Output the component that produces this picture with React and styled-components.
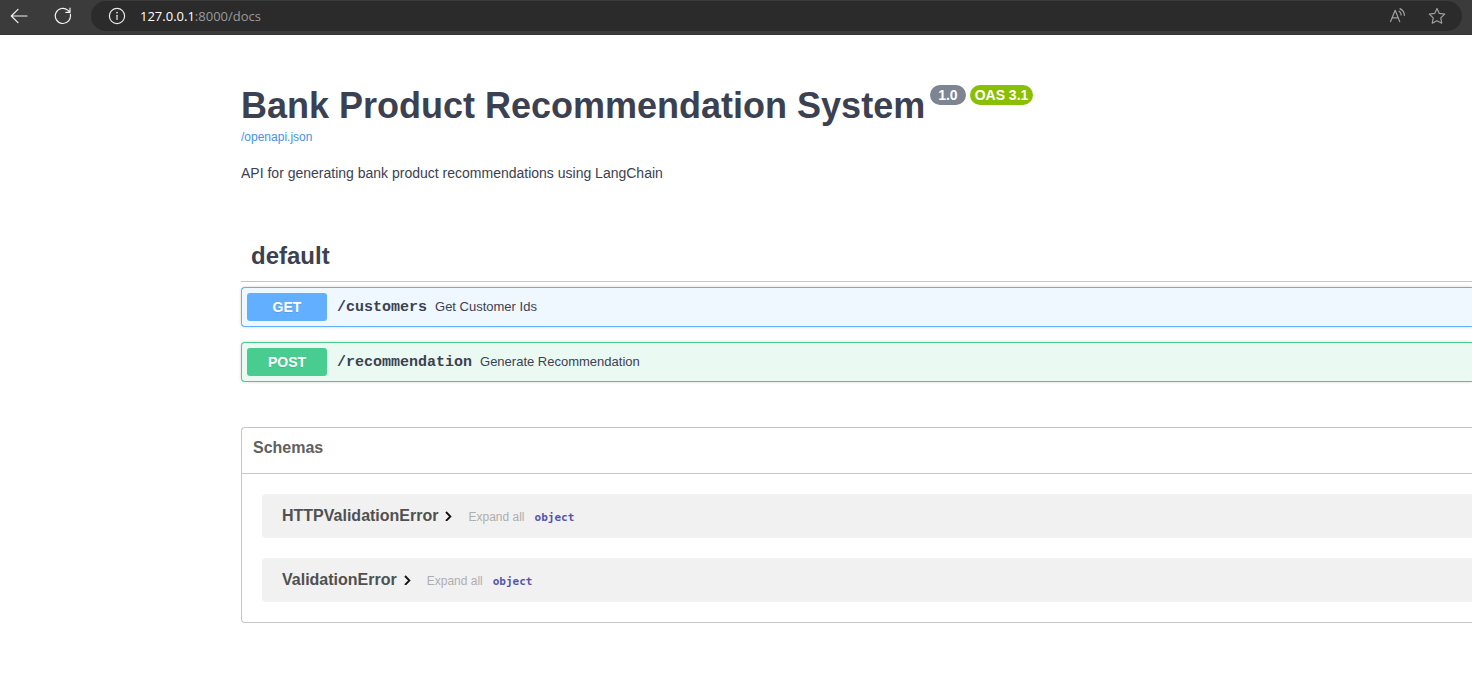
import React from "react";
import styled, { createGlobalStyle } from "styled-components";

const GlobalStyle = createGlobalStyle`
  * { box-sizing: border-box; }
  body {
    margin: 0;
    background: #fff;
    color: #3b4151;
    font-family: "Liberation Sans", Arial, sans-serif;
  }
  button { font-family: inherit; border: 0; padding: 0; background: none; cursor: pointer; }
`;

const BrowserBar = styled.header`
  display: flex;
  align-items: flex-start;
  height: 35px;
  padding: 1px 10px 0 7px;
  background: #3b3b3b;
  border-bottom: 1px solid #343434;
`;

const NavButton = styled.button`
  display: flex;
  align-items: center;
  justify-content: center;
  width: 24px;
  height: 30px;
  margin-right: 20px;
  color: #f2f2f2;
`;

const AddressBar = styled.div`
  flex: 1;
  display: flex;
  align-items: center;
  height: 30px;
  margin-left: -4px;
  padding: 0 13px 0 14px;
  border-radius: 15px;
  background: #2b2b2b;
`;

const AddressButton = styled.button`
  display: flex;
  align-items: center;
  justify-content: center;
  width: 24px;
  height: 24px;
  color: ${(p) => p.$color};
`;

const Url = styled.div`
  flex: 1;
  margin-left: 11px;
  font: 13px/18px "Open Sans", "Noto Sans", sans-serif;
  color: #9a9a9a;
`;

const UrlHost = styled.span`
  color: #fff;
`;

const AddressActions = styled.div`
  display: flex;
  gap: 16px;
`;

const Main = styled.main`
  padding: 50px 0 50px 241px;
`;

const TitleRow = styled.div`
  display: flex;
  align-items: flex-start;
`;

const Title = styled.h1`
  margin: 0 5px 0 0;
  font-size: 36px;
  line-height: 41px;
  white-space: nowrap;
`;

const Badge = styled.span`
  margin-right: 4px;
  padding: 0 ${(p) => p.$pad}px;
  border-radius: 10px;
  background: ${(p) => p.$color};
  color: #fff;
  font-size: 14px;
  font-weight: 700;
  line-height: 20px;
  white-space: nowrap;
`;

const SpecLink = styled.a`
  display: block;
  width: fit-content;
  margin-top: 4px;
  color: #4990e2;
  font-size: 12px;
  line-height: 14px;
  text-decoration: none;
`;

const Description = styled.p`
  margin: 21px 0 61px;
  font-size: 14px;
  line-height: 16px;
`;

const TagHeading = styled.h2`
  margin: 0 0 5px;
  padding: 0 10px 11px;
  border-bottom: 1px solid #c4c6ca;
  font-size: 24px;
  line-height: 28px;
`;

const Operations = styled.div`
  display: flex;
  flex-direction: column;
  gap: 15px;
`;

const Operation = styled.button`
  display: flex;
  align-items: center;
  width: 100%;
  padding: 5px;
  border: 1px solid ${(p) => p.$color};
  border-right: 0;
  border-radius: 4px 0 0 4px;
  background: ${(p) => p.$tint};
  box-shadow: 0 0 3px rgba(0, 0, 0, 0.19);
  color: #3b4151;
  text-align: left;
`;

const Method = styled.span`
  width: 80px;
  border-radius: 3px;
  background: ${(p) => p.$color};
  color: #fff;
  font-size: 14px;
  font-weight: 700;
  line-height: 28px;
  text-align: center;
  text-shadow: 0 1px 0 rgba(0, 0, 0, 0.1);
`;

const Path = styled.span`
  padding: 2px 8px 0 10px;
  font: 700 15px/18px "Liberation Mono", monospace;
`;

const Summary = styled.span`
  font-size: 13px;
  line-height: 16px;
`;

const Schemas = styled.section`
  margin-top: 45px;
  border: 1px solid #c4c6ca;
  border-right: 0;
  border-radius: 4px 0 0 4px;
`;

const SchemasHeading = styled.h3`
  margin: 0;
  padding: 11px 11px 16px;
  border-bottom: 1px solid #c4c6ca;
  color: #606060;
  font-size: 16px;
  line-height: 18px;
`;

const SchemaList = styled.div`
  display: flex;
  flex-direction: column;
  gap: 20px;
  padding: 20px 0 20px 20px;
`;

const Schema = styled.div`
  display: flex;
  align-items: baseline;
  padding: 13px 20px;
  border-radius: 4px 0 0 4px;
  background: #f1f1f1;
`;

const SchemaToggle = styled.button`
  display: flex;
  align-items: center;
  gap: 7px;
  color: #505050;
  font-size: 16px;
  font-weight: 700;
  line-height: 18px;
`;

const ExpandAll = styled.button`
  margin: 0 10px 0 16px;
  color: #afaeae;
  font-size: 12px;
  line-height: 14px;
`;

const SchemaType = styled.span`
  color: #5555aa;
  font: 700 11px/14px "DejaVu Sans Mono", monospace;
`;

const Icon = ({ size = 18, children }) => (
  <svg width={size} height={size} viewBox={`0 0 ${size} ${size}`} fill="none" stroke="currentColor" strokeWidth="1.2" strokeLinecap="round" strokeLinejoin="round" aria-hidden="true">
    {children}
  </svg>
);

const operations = [
  { method: "GET", path: "/customers", summary: "Get Customer Ids", color: "#61affe", tint: "#eff7ff" },
  { method: "POST", path: "/recommendation", summary: "Generate Recommendation", color: "#49cc90", tint: "#ebf9f3" },
];

const schemas = ["HTTPValidationError", "ValidationError"];

export default function App() {
  return (
    <>
      <GlobalStyle />
      <BrowserBar>
        <NavButton aria-label="Back">
          <Icon><path d="M17 9H1.5M8 2.3 1.3 9 8 15.7" /></Icon>
        </NavButton>
        <NavButton aria-label="Reload">
          <Icon><path d="M16.3 7.2A7.6 7.6 0 1 1 13.8 3.1L16 5.2M16 1.2V5.3H11.8" /></Icon>
        </NavButton>
        <AddressBar>
          <AddressButton aria-label="View site information" $color="#e8e8e8">
            <Icon>
              <circle cx="9" cy="9" r="7.6" />
              <path d="M9 8.3V12.4" />
              <path d="M9 5.6V5.8" strokeWidth="1.6" />
            </Icon>
          </AddressButton>
          <Url><UrlHost>127.0.0.1</UrlHost>:8000/docs</Url>
          <AddressActions>
            <AddressButton aria-label="Read aloud" $color="#a0a0a0">
              <Icon>
                <path d="M2.6 14.6 7.2 3.3 11.7 14.6M4.1 10.8H10.2M11.2 4.2Q13 5.4 13.1 8M12 1.6Q16.2 3.8 16.4 8.4" />
              </Icon>
            </AddressButton>
            <AddressButton aria-label="Add to favorites" $color="#a0a0a0">
              <Icon>
                <path d="M9 1.5 11.3 6.4 16.7 7.1 12.8 10.9 13.7 16.2 9 13.7 4.3 16.2 5.2 10.9 1.3 7.1 6.7 6.4Z" />
              </Icon>
            </AddressButton>
          </AddressActions>
        </AddressBar>
      </BrowserBar>
      <Main>
        <TitleRow>
          <Title>Bank Product Recommendation System</Title>
          <Badge $color="#7d8492" $pad={8}>1.0</Badge>
          <Badge $color="#89bf04" $pad={5}>OAS 3.1</Badge>
        </TitleRow>
        <SpecLink href="#openapi">/openapi.json</SpecLink>
        <Description>API for generating bank product recommendations using LangChain</Description>
        <TagHeading>default</TagHeading>
        <Operations>
          {operations.map((op) => (
            <Operation key={op.path} $color={op.color} $tint={op.tint}>
              <Method $color={op.color}>{op.method}</Method>
              <Path>{op.path}</Path>
              <Summary>{op.summary}</Summary>
            </Operation>
          ))}
        </Operations>
        <Schemas>
          <SchemasHeading>Schemas</SchemasHeading>
          <SchemaList>
            {schemas.map((name) => (
              <Schema key={name}>
                <SchemaToggle>
                  {name}
                  <svg width="7" height="10" viewBox="0 0 7 10" fill="none" stroke="#111" strokeWidth="1.8" aria-hidden="true">
                    <path d="M1 1 5.4 5.5 1 10" />
                  </svg>
                </SchemaToggle>
                <ExpandAll>Expand all</ExpandAll>
                <SchemaType>object</SchemaType>
              </Schema>
            ))}
          </SchemaList>
        </Schemas>
      </Main>
    </>
  );
}
